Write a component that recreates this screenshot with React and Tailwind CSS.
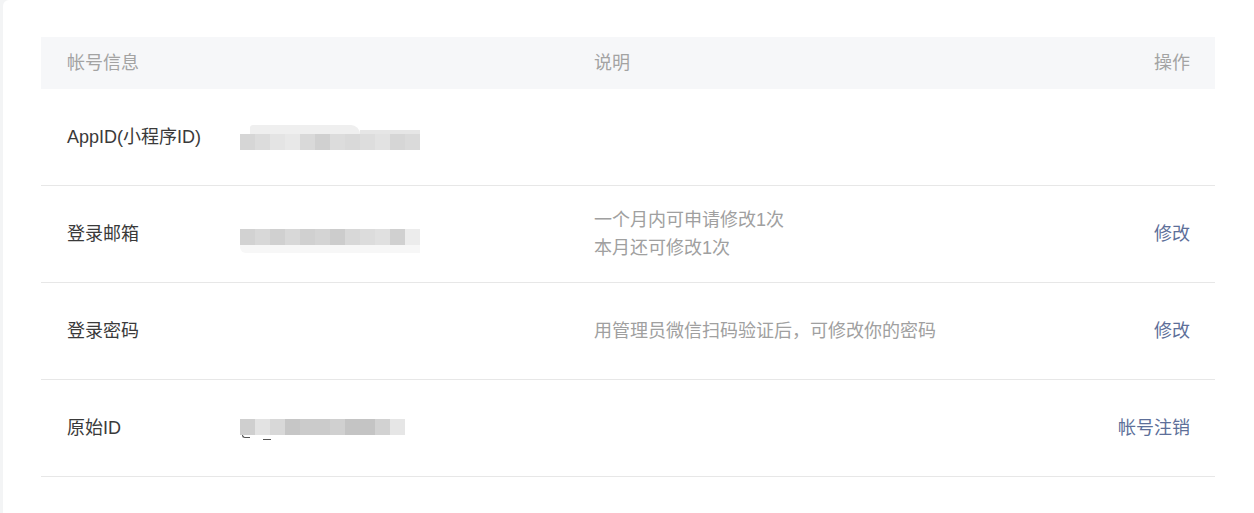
import React from 'react';

const mosaicApp = [
  'bg-[#d6d6d6]', 'bg-[#dcdcdc]', 'bg-[#e4e4e4]', 'bg-[#e8e8e8]', 'bg-[#d9d9d9]', 'bg-[#d0d0d0]',
  'bg-[#dcdcdc]', 'bg-[#d9d9d9]', 'bg-[#dddddd]', 'bg-[#e2e2e2]', 'bg-[#d6d6d6]', 'bg-[#dadada]',
];
const mosaicMail = [
  'bg-[#d2d2d2]', 'bg-[#d8d8d8]', 'bg-[#d0d0d0]', 'bg-[#d8d8d8]', 'bg-[#d0d0d0]', 'bg-[#d4d4d4]',
  'bg-[#cccccc]', 'bg-[#d8d8d8]', 'bg-[#dcdcdc]', 'bg-[#e0e0e0]', 'bg-[#d0d0d0]', 'bg-[#ececec]',
];
const mosaicRaw = [
  'bg-[#cfcfcf]', 'bg-[#e3e3e3]', 'bg-[#d8d8d8]', 'bg-[#c6c6c6]', 'bg-[#cbcbcb]', 'bg-[#cbcbcb]',
  'bg-[#d0d0d0]', 'bg-[#c4c4c4]', 'bg-[#c4c4c4]', 'bg-[#d2d2d2]', 'bg-[#e6e6e6]',
];

function Mosaic({ blocks, top, bottom }) {
  return (
    <div className="flex flex-col">
      {top}
      <div className="flex">
        {blocks.map((c, i) => (
          <div key={i} className={`w-[15px] h-[16px] ${c}`} />
        ))}
      </div>
      {bottom}
    </div>
  );
}

function Row({ label, value, desc, action }) {
  return (
    <div className="grid grid-cols-[553px_1fr_auto] items-center h-[97px] border-b border-[#e7e7e7]">
      <div className="flex items-center pl-[26px]">
        <span className="w-[173px] text-[#3a3a3a]">{label}</span>
        {value}
      </div>
      <div className="text-[#a0a0a0] leading-[28px]">{desc}</div>
      <div className="pr-[25px] text-[#5d6f99] text-right">{action}</div>
    </div>
  );
}

export default function App() {
  return (
    <div className="min-h-screen bg-[#f3f4f5] pl-[3px] text-[18px] font-['Liberation_Sans','Noto_Sans_CJK_SC',sans-serif]">
      <div className="bg-white rounded-tl-[6px] min-h-[513px] pt-[37px] pl-[38px] pr-[39px]">
        {/* header */}
        <div className="grid grid-cols-[553px_1fr_auto] items-center h-[52px] bg-[#f6f7f9] text-[#a3a3a3]">
          <div className="pl-[26px]">帐号信息</div>
          <div>说明</div>
          <div className="pr-[25px]">操作</div>
        </div>

        <Row
          label="AppID(小程序ID)"
          value={
            <div className="pt-[1px]">
              <Mosaic
                blocks={mosaicApp}
                top={
                  <div className="flex h-[9px] items-end">
                    <div className="w-[10px]" />
                    <div className="w-[110px] h-[9px] bg-[#efefef] rounded-tl-[10px] rounded-tr-[30px]" />
                    <div className="w-[60px] h-[4px] bg-[#e6e6e6]" />
                  </div>
                }
              />
            </div>
          }
        />
        <Row
          label="登录邮箱"
          value={
            <div className="pt-[13px]">
              <Mosaic
                blocks={mosaicMail}
                bottom={<div className="w-[180px] h-[8px] bg-[#f7f7f7] rounded-bl-[6px]" />}
              />
            </div>
          }
          desc={
            <>
              <div>一个月内可申请修改1次</div>
              <div>本月还可修改1次</div>
            </>
          }
          action="修改"
        />
        <Row label="登录密码" desc="用管理员微信扫码验证后，可修改你的密码" action="修改" />
        <Row
          label="原始ID"
          value={
            <div className="pt-[3px]">
              <Mosaic
                blocks={mosaicRaw}
                bottom={
                  <div className="flex h-[6px]">
                    <span className="ml-[2px] w-[8px] h-[3px] border-b-[1.5px] border-l-[1px] border-[#555] rounded-bl-[3px]" />
                    <span className="ml-[13px] mt-[4px] w-[8px] h-[1px] bg-[#555]" />
                  </div>
                }
              />
            </div>
          }
          action="帐号注销"
        />
      </div>
    </div>
  );
}
